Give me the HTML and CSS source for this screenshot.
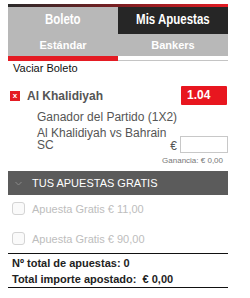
FILE: index.html
```html
<!DOCTYPE html>
<html>
<head>
<meta charset="utf-8">
<link rel="stylesheet" href="styles.css">
</head>
<body>
<div class="wrap">
  <div class="topbar"></div>
  <div class="tabs">
    <div class="tab tab-light"><span class="tab-label">Boleto</span></div>
    <div class="tab tab-dark"><span class="tab-label">Mis Apuestas</span></div>
  </div>
  <div class="subtabs">
    <div class="subtab">Estándar</div>
    <div class="subtab">Bankers</div>
  </div>
  <div class="underline">
    <div class="ul-active"></div>
    <div class="ul-rest"></div>
  </div>
  <div class="clear">Vaciar Boleto</div>

  <div class="sel-head">
    <span class="remove">x</span>
    <span class="sel-name">Al Khalidiyah</span>
    <span class="odds">1.04</span>
  </div>
  <div class="market">Ganador del Partido (1X2)</div>
  <div class="sel-body">
    <div class="match">Al Khalidiyah vs Bahrain SC</div>
    <div class="stake">
      <span class="euro">€</span>
      <input class="stake-input" type="text">
    </div>
  </div>
  <div class="gain">Ganancia: € 0,00</div>

  <div class="free-head">
    <svg class="chev" width="7" height="5" viewBox="0 0 7 5"><path d="M0.5 1 L3.5 4 L6.5 1" fill="none" stroke="#8a8a8a" stroke-width="1"/></svg>
    <span>TUS APUESTAS GRATIS</span>
  </div>
  <div class="free-list">
    <div class="free-row"><span class="cb"></span><span>Apuesta Gratis € 11,00</span></div>
    <div class="free-row"><span class="cb"></span><span>Apuesta Gratis € 90,00</span></div>
  </div>

  <div class="totals">
    <div>Nº total de apuestas: 0</div>
    <div>Total importe apostado:&nbsp; € 0,00</div>
  </div>
</div>
</body>
</html>
```
FILE: styles.css
```css
html, body {
  margin: 0;
  padding: 0;
  background: #fff;
}
body {
  font-family: "Liberation Sans", Arial, sans-serif;
}
.wrap {
  width: 220px;
  margin: 4px 8px 0 8px;
}
.topbar {
  height: 3px;
  background: linear-gradient(to right, #2a2a2a 0%, #7a1f22 50%, #e41b23 100%);
}
.tabs {
  display: flex;
  height: 27px;
}
.tab {
  flex: 1;
  text-align: center;
  color: #fff;
  font-weight: bold;
  font-size: 14px;
  line-height: 25px;
}
.tab-label {
  display: inline-block;
  transform: scaleX(0.82);
}
.tab-light { background: #b8b8b8; }
.tab-dark { background: #262626; }
.subtabs {
  display: flex;
  height: 22px;
  background: #b8b8b8;
}
.subtab {
  flex: 1;
  text-align: center;
  color: #fff;
  font-weight: bold;
  font-size: 11px;
  line-height: 22px;
}
.underline {
  display: flex;
  height: 5px;
}
.ul-active {
  flex: 1;
  background: #e41b23;
}
.ul-rest {
  flex: 1;
  height: 4px;
  border-bottom: 1px solid #c4c4c4;
}
.clear {
  font-size: 11px;
  line-height: 14px;
  color: #111;
  padding-left: 5px;
}
.sel-head {
  display: flex;
  align-items: center;
  height: 19px;
  margin-top: 11px;
}
.remove {
  width: 10px;
  height: 10px;
  margin-left: 2px;
  background: #e41b23;
  color: #fff;
  font-size: 8px;
  font-weight: bold;
  line-height: 9px;
  text-align: center;
}
.sel-name {
  margin-left: 7px;
  font-size: 12px;
  font-weight: bold;
  color: #555;
  flex: 1;
}
.odds {
  width: 40px;
  height: 19px;
  margin-right: 1px;
  padding-left: 6px;
  background: #e8161f;
  color: #fff;
  font-size: 12px;
  font-weight: bold;
  line-height: 19px;
  border-radius: 1px;
}
.market {
  font-size: 12px;
  line-height: 16px;
  color: #555;
  padding-left: 29px;
  margin-top: 4px;
}
.sel-body {
  display: flex;
  align-items: flex-end;
  justify-content: space-between;
}
.match {
  width: 135px;
  padding: 2px 0 2px 29px;
  font-size: 12px;
  line-height: 12px;
  color: #555;
}
.stake {
  display: flex;
  align-items: flex-end;
}
.euro {
  font-size: 12px;
  color: #555;
  line-height: 14px;
  margin-right: 3px;
}
.stake-input {
  width: 48px;
  height: 17px;
  box-sizing: border-box;
  border: 1px solid #c8c8c8;
  margin: 0;
  padding: 0;
  background: #fff;
  display: block;
}
.gain {
  text-align: right;
  font-size: 8px;
  line-height: 10px;
  color: #777;
  padding-right: 5px;
  margin-top: 3px;
}
.free-head {
  display: flex;
  align-items: center;
  height: 24px;
  margin-top: 5px;
  background: #5b5b5b;
  color: #fff;
  font-size: 11px;
}
.chev {
  margin-left: 7px;
  margin-right: 10px;
}
.free-list {
  display: flex;
  flex-direction: column;
  gap: 17px;
  padding: 7px 0 8px 0;
}
.free-row {
  display: flex;
  align-items: center;
  height: 13px;
  font-size: 11px;
  color: #bdbdbd;
}
.cb {
  width: 11px;
  height: 11px;
  border: 1px solid #d4d4d4;
  border-radius: 3px;
  background: #fafafa;
  margin-left: 4px;
  margin-right: 7px;
}
.totals {
  border-top: 1px solid #111;
  border-bottom: 1px solid #111;
  padding: 1px 0 0 4px;
  font-size: 11px;
  font-weight: bold;
  line-height: 16px;
  color: #222;
}
```
